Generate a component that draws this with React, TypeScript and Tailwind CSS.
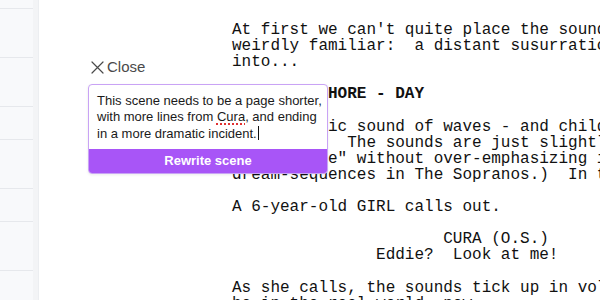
import React from "react";

const lines: { text: string; bold?: boolean }[] = [
  { text: "At first we can't quite place the sound of it, but it's" },
  { text: "weirdly familiar:  a distant susurration that swells" },
  { text: "into..." },
  { text: "" },
  { text: "EXT. LAKESHORE - DAY", bold: true },
  { text: "" },
  { text: "The rhythmic sound of waves - and children laughing." },
  { text: "shrieking.  The sounds are just slightly off, like" },
  { text: 'a "hum-tone" without over-emphasizing it (think of the' },
  { text: "dream-sequences in The Sopranos.)  In the distance," },
  { text: "" },
  { text: "A 6-year-old GIRL calls out." },
  { text: "" },
  { text: "                      CURA (O.S.)" },
  { text: "               Eddie?  Look at me!" },
  { text: "" },
  { text: "As she calls, the sounds tick up in volume, as if we" },
  { text: "he in the real world, now..." },
];

const rows = [9, 49, 49, 33, 49, 33, 49, 49];

const App: React.FC = () => {
  return (
    <div className="flex h-[300px] w-[600px] overflow-hidden bg-white">
      <aside className="flex h-full w-[39px] shrink-0 border-r border-[#eceef1] bg-[#f8f9fb]">
        <div className="flex flex-1 flex-col">
          {rows.map((h, i) => (
            <div
              key={i}
              className="shrink-0 border-b border-[#e6e8ec]"
              style={{ height: h }}
            />
          ))}
        </div>
        <div className="w-[5px] bg-[#f3f4f6]" />
      </aside>

      <main className="relative flex-1">
        <div
          className="pl-[193px] pt-[22px] text-[16px] leading-[16.1px] text-[#111]"
          style={{ fontFamily: '"Liberation Mono", "Courier New", monospace' }}
        >
          {lines.map((l, i) => (
            <div
              key={i}
              className={`h-[16.1px] whitespace-pre ${l.bold ? "font-bold" : ""}`}
            >
              {l.text}
            </div>
          ))}
        </div>

        <div
          className="absolute left-[49px] top-[58px] w-[240px]"
          style={{ fontFamily: '"Liberation Sans", Arial, sans-serif' }}
        >
          <button className="mb-[8px] flex items-center gap-[3px] pl-[3px] text-[15px] leading-[18px] text-[#4a4a4a]">
            <svg width="13" height="13" viewBox="0 0 13 13" fill="none">
              <path
                d="M1 1L12 12M12 1L1 12"
                stroke="#4a4a4a"
                strokeWidth="1.2"
                strokeLinecap="round"
              />
            </svg>
            <span>Close</span>
          </button>
          <div className="overflow-hidden rounded-[4px] border border-[#c9a3f5] bg-white shadow-[0_1px_3px_rgba(0,0,0,0.08)]">
            <div className="h-[64px] whitespace-nowrap pl-[8px] pt-[8px] text-[13px] leading-[15.5px] text-[#1a1a1a]">
              This scene needs to be a page shorter,
              <br />
              with more lines from{" "}
              <span className="underline decoration-[#e03131] decoration-dotted decoration-[2px] underline-offset-[3px]">
                Cura
              </span>
              , and ending
              <br />
              in a more dramatic incident.
              <span className="ml-[1px] inline-block h-[14px] w-[1px] translate-y-[2px] bg-[#111]" />
            </div>
            <div className="flex h-[24px] items-center justify-center bg-[#a855f7] text-[13px] font-bold text-white">
              Rewrite scene
            </div>
          </div>
        </div>
      </main>
    </div>
  );
};

export default App;
